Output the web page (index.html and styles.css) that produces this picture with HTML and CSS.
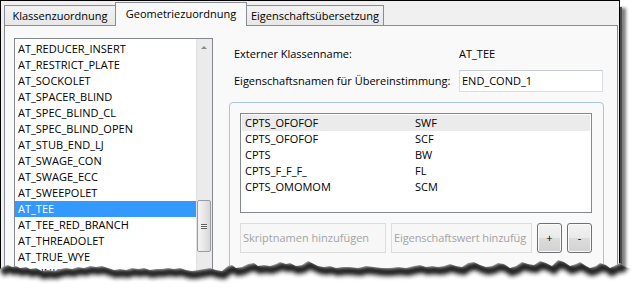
FILE: index.html
```html
<!DOCTYPE html>
<html lang="de">
<head>
<meta charset="utf-8">
<title>Geometriezuordnung</title>
<link rel="stylesheet" href="styles.css">
</head>
<body>
<div class="frame">
  <div class="tabs">
    <div class="tab t1">Klassenzuordnung</div>
    <div class="tab t2 active">Geometriezuordnung</div>
    <div class="tab t3">Eigenschaftsübersetzung</div>
  </div>
  <div class="panel">
    <div class="listbox">
      <div class="items">
        <div class="item">AT_REDUCER_INSERT</div>
        <div class="item">AT_RESTRICT_PLATE</div>
        <div class="item">AT_SOCKOLET</div>
        <div class="item">AT_SPACER_BLIND</div>
        <div class="item">AT_SPEC_BLIND_CL</div>
        <div class="item">AT_SPEC_BLIND_OPEN</div>
        <div class="item">AT_STUB_END_LJ</div>
        <div class="item">AT_SWAGE_CON</div>
        <div class="item">AT_SWAGE_ECC</div>
        <div class="item">AT_SWEEPOLET</div>
        <div class="item sel">AT_TEE</div>
        <div class="item">AT_TEE_RED_BRANCH</div>
        <div class="item">AT_THREADOLET</div>
        <div class="item">AT_TRUE_WYE</div>
        <div class="item">AT_UNION</div>
      </div>
      <div class="scroll">
        <div class="sb-up"><span class="arrow"></span></div>
        <div class="thumb"><span class="grip"></span></div>
      </div>
    </div>
    <div class="right">
      <div class="row row1"><span class="lbl">Externer Klassenname:</span><span class="val">AT_TEE</span></div>
      <div class="row row2"><span class="lbl">Eigenschaftsnamen für Übereinstimmung:</span><div class="input">END_COND_1</div></div>
      <div class="group">
        <div class="grid">
          <div class="grow sel"><span class="c1">CPTS_OFOFOF</span><span>SWF</span></div>
          <div class="grow"><span class="c1">CPTS_OFOFOF</span><span>SCF</span></div>
          <div class="grow"><span class="c1">CPTS</span><span>BW</span></div>
          <div class="grow"><span class="c1">CPTS_F_F_F_</span><span>FL</span></div>
          <div class="grow"><span class="c1">CPTS_OMOMOM</span><span>SCM</span></div>
        </div>
        <div class="actions">
          <div class="wm w1">Skriptnamen hinzufügen</div>
          <div class="wm w2"><span class="clip">Eigenschaftswert hinzufüg</span></div>
          <div class="btn">+</div>
          <div class="btn">-</div>
        </div>
        <div class="sub">Standardzuordnung:</div>
      </div>
    </div>
  </div>
</div>
<svg class="tear" width="636" height="291" viewBox="0 0 636 291" xmlns="http://www.w3.org/2000/svg">
  <defs>
    <clipPath id="below">
      <path d="M-5,269 L0,269 4,266 8,265 12,267 16,266 20,268 26,267 30,269 36,268 42,271 48,270 54,271 60,269 66,268 72,269 78,267 84,268 90,266 96,267 102,266 108,268 114,270 120,269 126,270 132,268 138,269 144,268 150,270 156,269 162,269 168,268 174,269 180,268 186,270 192,271 198,270 204,269 210,268 216,270 222,271 228,266 232,265 236,268 242,267 248,264 254,263 258,266 264,265 270,266 276,264 280,262 286,264 290,263 296,266 302,265 308,261 312,263 318,266 324,267 330,266 336,268 342,267 350,267 358,268 366,266 374,267 382,268 390,268 398,267 406,268 414,266 420,265 426,267 432,266 438,267 444,266 450,264 456,266 462,267 468,263 474,262 480,265 486,267 492,266 498,263 504,264 510,268 516,266 522,262 528,264 534,265 540,261 546,263 552,266 558,260 564,262 570,266 576,264 580,262 586,266 590,268 596,266 600,263 606,265 610,268 616,265 620,263 624,266 628,268 640,268 640,300 -5,300 Z"/>
    </clipPath>
    <filter id="soft" filterUnits="userSpaceOnUse" x="-20" y="230" width="680" height="80">
      <feGaussianBlur stdDeviation="2"/>
    </filter>
  </defs>
  <rect x="-5" y="240" width="650" height="60" fill="#fff" clip-path="url(#below)"/>
  <g clip-path="url(#below)">
    <polyline filter="url(#soft)" transform="translate(2,4)" fill="none" stroke="#1c1c1c" stroke-width="8" points="0,269 4,266 8,265 12,267 16,266 20,268 26,267 30,269 36,268 42,271 48,270 54,271 60,269 66,268 72,269 78,267 84,268 90,266 96,267 102,266 108,268 114,270 120,269 126,270 132,268 138,269 144,268 150,270 156,269 162,269 168,268 174,269 180,268 186,270 192,271 198,270 204,269 210,268 216,270 222,271 228,266 232,265 236,268 242,267 248,264 254,263 258,266 264,265 270,266 276,264 280,262 286,264 290,263 296,266 302,265 308,261 312,263 318,266 324,267 330,266 336,268 342,267 350,267 358,268 366,266 374,267 382,268 390,268 398,267 406,268 414,266 420,265 426,267 432,266 438,267 444,266 450,264 456,266 462,267 468,263 474,262 480,265 486,267 492,266 498,263 504,264 510,268 516,266 522,262 528,264 534,265 540,261 546,263 552,266 558,260 564,262 570,266 576,264 580,262 586,266 590,268 596,266 600,263 606,265 610,268 616,265 620,263 624,266"/>
  </g>
</svg>
</body>
</html>
```
FILE: styles.css
```css
html, body {
  margin: 0;
  padding: 0;
  width: 636px;
  height: 291px;
  overflow: hidden;
  background: #fff;
}
body {
  position: relative;
  font-family: "Open Sans", "Noto Sans", sans-serif;
  font-size: 11px;
  color: #000;
}
.frame {
  width: 620px;
  height: 300px;
  box-sizing: border-box;
  border: 1px solid #000;
  background: #f0f0f0;
  box-shadow: 3px 6px 0 -1px #4a4a4a, 6px 8px 3px rgba(0, 0, 0, 0.5);
}
.tabs {
  display: flex;
  align-items: flex-end;
  height: 24px;
  padding-left: 3px;
}
.tab {
  box-sizing: border-box;
  height: 20px;
  border: 1px solid #898c95;
  border-bottom: none;
  background: linear-gradient(#f3f3f3, #e7e7e7);
  text-align: center;
  line-height: 19px;
  white-space: nowrap;
}
.t1 { width: 112px; }
.t2 { width: 132px; margin-left: -1px; }
.t3 { width: 138px; margin-left: -1px; }
.tab.active {
  position: relative;
  z-index: 1;
  height: 24px;
  margin-bottom: -1px;
  background: #f9f9f9;
  line-height: 22px;
}
.panel {
  box-sizing: border-box;
  width: 614px;
  height: 280px;
  margin-left: 3px;
  border: 1px solid #898c95;
  background: #f9f9f9;
  display: flex;
  align-items: flex-start;
  padding: 12px 0 0 9px;
}
.listbox {
  box-sizing: border-box;
  width: 199px;
  height: 262px;
  border: 1px solid #828790;
  background: #fff;
  display: flex;
}
.items {
  width: 181px;
  padding-top: 2px;
}
.item {
  height: 16px;
  line-height: 16px;
  padding-left: 3px;
  white-space: nowrap;
}
.item.sel {
  background: #3399ff;
  color: #fff;
}
.scroll {
  width: 16px;
  background: #ebebeb;
  box-shadow: inset 1px 0 0 #e2e2e2;
}
.sb-up {
  height: 17px;
  display: flex;
  justify-content: center;
  padding-top: 7px;
  box-sizing: border-box;
}
.arrow {
  width: 0;
  height: 0;
  border-left: 3px solid transparent;
  border-right: 3px solid transparent;
  border-bottom: 3px solid #8a8a8a;
}
.thumb {
  box-sizing: border-box;
  height: 52px;
  margin: 144px 1px 0;
  border: 1px solid #9c9c9c;
  border-radius: 2px;
  background: linear-gradient(to right, #f4f4f4, #e6e6e6 55%, #d6d6d6);
  display: flex;
  align-items: center;
  justify-content: center;
}
.grip {
  width: 6px;
  height: 5px;
  background: repeating-linear-gradient(#5f5f5f 0 1px, #f4f4f4 1px 2px);
}
.right {
  width: 375px;
  margin-left: 16px;
}
.row {
  display: flex;
  white-space: nowrap;
}
.lbl {
  box-sizing: border-box;
  width: 230px;
  padding-left: 5px;
}
.row1 {
  height: 32px;
  line-height: 32px;
}
.row2 {
  height: 22px;
  line-height: 22px;
}
.input {
  box-sizing: border-box;
  width: 144px;
  height: 22px;
  border: 1px solid #d9dde4;
  border-top-color: #c8ccd3;
  background: #fff;
  padding-left: 2px;
  line-height: 20px;
}
.group {
  box-sizing: border-box;
  width: 375px;
  height: 200px;
  margin-top: 10px;
  border: 1px solid #a9c4df;
  border-radius: 4px;
  padding: 10px 11px 0 10px;
}
.grid {
  box-sizing: border-box;
  width: 352px;
  height: 100px;
  border: 1px solid #828790;
  background: #fff;
  padding: 1px;
}
.grow {
  display: flex;
  height: 16px;
  line-height: 16px;
  padding-left: 3px;
  white-space: nowrap;
}
.grow.sel {
  background: #ebebeb;
}
.c1 {
  width: 170px;
}
.actions {
  display: flex;
  gap: 5px;
  margin-top: 10px;
  height: 30px;
}
.wm {
  box-sizing: border-box;
  height: 30px;
  border: 1px solid #dcdcdc;
  background: #f7f7f7;
  color: #a3a3a3;
  padding-left: 2px;
  line-height: 28px;
  white-space: nowrap;
  overflow: hidden;
}
.w1 { width: 146px; }
.w2 { width: 141px; }
.clip {
  letter-spacing: -0.1px;
}
.btn {
  box-sizing: border-box;
  width: 25px;
  height: 30px;
  border: 1px solid #707070;
  border-radius: 3px;
  background: linear-gradient(#f3f3f3, #e9e9e9 50%, #dcdcdc 51%, #d2d2d2);
  box-shadow: inset 0 0 0 1px #fbfbfb;
  text-align: center;
  line-height: 28px;
}
.sub {
  margin-top: 10px;
  padding-left: 1px;
  white-space: nowrap;
}
.tear {
  position: absolute;
  left: 0;
  top: 0;
  pointer-events: none;
}
```
